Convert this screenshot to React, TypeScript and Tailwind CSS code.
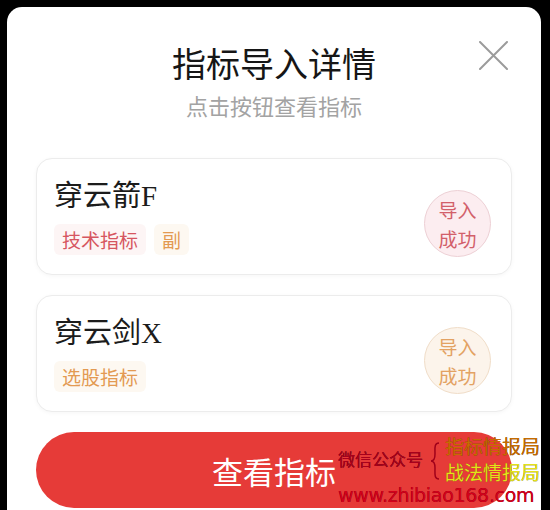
type Tag = { label: string; tone: 'red' | 'orange' };

type Item = {
  name: string;
  tags: Tag[];
  tone: 'red' | 'orange';
};

const items: Item[] = [
  {
    name: '穿云箭F',
    tags: [
      { label: '技术指标', tone: 'red' },
      { label: '副', tone: 'orange' },
    ],
    tone: 'red',
  },
  {
    name: '穿云剑X',
    tags: [{ label: '选股指标', tone: 'orange' }],
    tone: 'orange',
  },
];

function TagChip({ tag }: { tag: Tag }) {
  const cls =
    tag.tone === 'red'
      ? 'bg-[#fdf5f5] text-[#d65660]'
      : 'bg-[#fdf8f1] text-[#e39a52]';
  return (
    <span
      className={`h-[31px] px-[8px] flex items-center rounded-[6px] text-[19px] leading-none ${cls}`}
    >
      {tag.label}
    </span>
  );
}

function Badge({ tone }: { tone: 'red' | 'orange' }) {
  const cls =
    tone === 'red'
      ? 'bg-[#fcedf0] border-[#edd0d5] text-[#d2606a]'
      : 'bg-[#fcf4eb] border-[#f0ddc8] text-[#e3a263]';
  return (
    <div
      className={`w-[67px] h-[67px] shrink-0 rounded-full border flex flex-col items-center justify-center text-[19px] leading-[29px] ${cls}`}
    >
      <span>导入</span>
      <span>成功</span>
    </div>
  );
}

function ItemCard({ item }: { item: Item }) {
  return (
    <div className="h-[117px] rounded-[16px] border border-[#ececec] bg-white shadow-[0_1px_4px_rgba(0,0,0,0.04)] flex items-end pl-[17px] pr-[20px] pb-[17px]">
      <div className="flex-1 flex flex-col self-stretch pt-[20px]">
        <div className="text-[29px] leading-[34px] text-[#1c1c1c] font-['Liberation_Serif','Noto_Sans_CJK_SC',serif]">
          {item.name}
        </div>
        <div className="mt-[11px] flex gap-[8px]">
          {item.tags.map((t) => (
            <TagChip key={t.label} tag={t} />
          ))}
        </div>
      </div>
      <Badge tone={item.tone} />
    </div>
  );
}

export default function App() {
  return (
    <div className="w-[550px] h-[510px] bg-black overflow-hidden pt-[7px] font-['Noto_Sans_CJK_SC',sans-serif]">
      <div className="relative ml-[7px] w-[534px] h-[540px] bg-white rounded-[15px] px-[29px] pt-[35px]">
        <button className="absolute right-[33px] top-[34px]">
          <svg width="29" height="29" viewBox="0 0 29 29" stroke="#9b9b9b" strokeWidth="2" strokeLinecap="round">
            <path d="M1 1 L28 28 M28 1 L1 28" />
          </svg>
        </button>

        <h2 className="text-center text-[34px] leading-[42px] text-[#161616] font-normal">
          指标导入详情
        </h2>
        <p className="mt-[7px] text-center text-[22px] leading-[28px] text-[#a3a3a3]">
          点击按钮查看指标
        </p>

        <div className="mt-[39px] flex flex-col gap-[20px]">
          {items.map((it) => (
            <ItemCard key={it.name} item={it} />
          ))}
        </div>

        <div className="relative mt-[20px]">
          <button className="w-full h-[76px] rounded-full bg-[#e63b38] text-white text-[31px] leading-none">
            查看指标
          </button>

          <div className="absolute left-[302px] top-[3px] w-[220px] h-[80px] pointer-events-none">
            <div className="absolute left-0 top-[13px] text-[17px] leading-[22px] text-[#a8001c] [text-shadow:0_0_0.5px_#40000a]">
              微信公众号
            </div>
            <svg
              className="absolute left-[92px] top-[7px]"
              width="12"
              height="38"
              viewBox="0 0 12 38"
              fill="none"
              stroke="#a0001a"
              strokeWidth="1.5"
            >
              <path d="M9 1 C4 1 5 6 5 12 C5 17 4 19 1 19 C4 19 5 21 5 26 C5 32 4 37 9 37" />
            </svg>
            <div className="absolute left-[107px] top-[-1px] text-[19px] leading-[24px] text-[#c66c00] [text-shadow:0_0_0.5px_#5a2a00]">
              指标情报局
            </div>
            <div className="absolute left-[107px] top-[25px] text-[19px] leading-[24px] text-[#e6e21a] [text-shadow:0_0_0.5px_#4a4a00]">
              战法情报局
            </div>
            <div className="absolute left-0 top-[48px] text-[19px] leading-[24px] text-[#d4001a] font-['DejaVu_Sans',sans-serif] tracking-[-0.3px] [text-shadow:0_0_0.5px_#5a0010]">
              www.zhibiao168.com
            </div>
          </div>
        </div>
      </div>
    </div>
  );
}
